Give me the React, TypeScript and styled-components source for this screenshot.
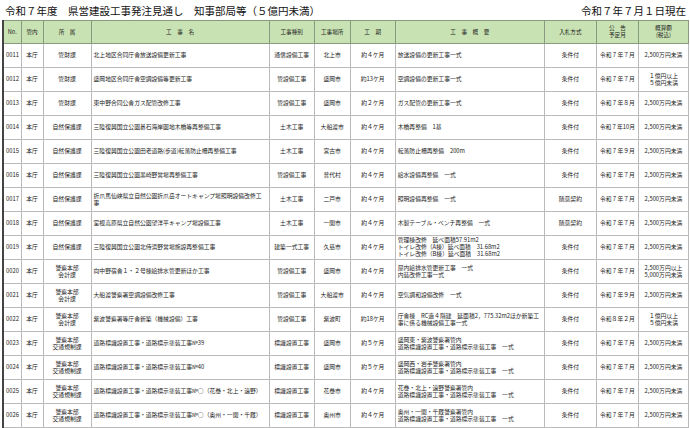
import React from 'react';
import styled, { createGlobalStyle } from 'styled-components';

const Global = createGlobalStyle`
  body { margin: 0; background: #fff; font-family: "Noto Sans CJK JP", "Noto Sans", sans-serif; color: #222; }
`;

const Page = styled.div`
  width: 690px;
  height: 428px;
  overflow: hidden;
`;

const TitleBar = styled.div`
  display: flex;
  justify-content: space-between;
  align-items: center;
  height: 20px;
  padding: 0 4px 0 5px;
  font-size: 10.5px;
  color: #111;
`;

const Table = styled.table`
  margin-left: 2px;
  width: 687px;
  border-collapse: collapse;
  table-layout: fixed;
  border-left: 2px solid #444;
  font-size: 5.8px;
`;

const Th = styled.th`
  background: #c9e2b3;
  border: 1px solid #8a9a80;
  height: 22px;
  font-weight: normal;
  font-size: 5.6px;
  line-height: 1.2;
  text-align: center;
  padding: 0;
`;

const Td = styled.td<{ $align?: string; $nowrap?: boolean }>`
  border: 1px solid #bbb;
  height: 23px;
  padding: 0 2px;
  text-align: ${p => p.$align || 'center'};
  line-height: 1.2;
  vertical-align: middle;
  white-space: ${p => (p.$nowrap ? 'nowrap' : 'pre-line')};
`;

type Row = [string, string, string, string, string, string, string, string, string, string];

const rows: Row[] = [
  ['0011', '管財課', '北上地区合同庁舎放送設備更新工事', '通信設備工事', '北上市', '約４ケ月', '放送設備の更新工事一式', '条件付', '令和７年７月', '2,500万円未満'],
  ['0012', '管財課', '盛岡地区合同庁舎空調設備等更新工事', '管設備工事', '盛岡市', '約13ケ月', '空調設備の更新工事一式', '条件付', '令和７年７月', '１億円以上\n５億円未満'],
  ['0013', '管財課', '東中野合同公舎ガス配管改修工事', '管設備工事', '盛岡市', '約２ケ月', 'ガス配管の更新工事一式', '条件付', '令和７年８月', '2,500万円未満'],
  ['0014', '自然保護課', '三陸復興国立公園碁石海岸園地木橋等再整備工事', '土木工事', '大船渡市', '約４ケ月', '木橋再整備　1基', '条件付', '令和７年10月', '2,500万円未満'],
  ['0015', '自然保護課', '三陸復興国立公園田老道路(歩道)転落防止柵再整備工事', '土木工事', '宮古市', '約４ケ月', '転落防止柵再整備　200m', '条件付', '令和７年９月', '2,500万円未満'],
  ['0016', '自然保護課', '三陸復興国立公園黒崎野営場再整備工事', '管設備工事', '普代村', '約４ケ月', '給水設備再整備　一式', '条件付', '令和７年７月', '2,500万円未満'],
  ['0017', '自然保護課', '折爪馬仙峡県立自然公園折爪岳オートキャンプ場照明設備改修工事', '土木工事', '二戸市', '約４ケ月', '照明設備再整備　一式', '随意契約', '令和７年７月', '2,500万円未満'],
  ['0018', '自然保護課', '室根高原県立自然公園望洋平キャンプ場設備工事', '土木工事', '一関市', '約４ケ月', '木製テーブル・ベンチ再整備　一式', '随意契約', '令和７年７月', '2,500万円未満'],
  ['0019', '自然保護課', '三陸復興国立公園北侍浜野営場施設再整備工事', '建築一式工事', '久慈市', '約４ケ月', '管理棟改修　延べ面積57.91m2\nトイレ改修（A棟）延べ面積　31.68m2\nトイレ改修（B棟）延べ面積　31.68m2', '条件付', '令和７年７月', '2,500万円未満'],
  ['0020', '警察本部\n会計課', '向中野宿舎１・２号棟給排水管更新ほか工事', '管設備工事', '盛岡市', '約４ケ月', '屋内給排水管更新工事　一式\n内装改修工事一式', '条件付', '令和７年７月', '2,500万円以上\n5,000万円未満'],
  ['0021', '警察本部\n会計課', '大船渡警察署空調設備改修工事', '管設備工事', '大船渡市', '約４ケ月', '空気調和設備改修　一式', '条件付', '令和７年９月', '2,500万円未満'],
  ['0022', '警察本部\n会計課', '紫波警察署等庁舎新築（機械設備）工事', '管設備工事', '紫波町', '約18ケ月', '庁舎棟　RC造４階建　延面積2，775.32m2ほか新築工事に係る機械設備工事一式', '条件付', '令和８年２月', '１億円以上\n５億円未満'],
  ['0023', '警察本部\n交通規制課', '道路標識設置工事・道路標示塗装工事№39', '標識設置工事', '盛岡市', '約５ケ月', '盛岡東・紫波警察署管内\n道路標識設置工事・道路標示塗装工事　一式', '条件付', '令和７年７月', '2,500万円未満'],
  ['0024', '警察本部\n交通規制課', '道路標識設置工事・道路標示塗装工事№40', '標識設置工事', '盛岡市', '約５ケ月', '盛岡西・岩手警察署管内\n道路標識設置工事・道路標示塗装工事　一式', '条件付', '令和７年７月', '2,500万円未満'],
  ['0025', '警察本部\n交通規制課', '道路標識設置工事・道路標示塗装工事№○（花巻・北上・遠野）', '標識設置工事', '花巻市', '約４ケ月', '花巻・北上・遠野警察署管内\n道路標識設置工事・道路標示塗装工事　一式', '条件付', '令和７年７月', '2,500万円未満'],
  ['0026', '警察本部\n交通規制課', '道路標識設置工事・道路標示塗装工事№○（奥州・一関・千厩）', '標識設置工事', '奥州市', '約４ケ月', '奥州・一関・千厩警察署管内\n道路標識設置工事・道路標示塗装工事　一式', '条件付', '令和７年７月', '2,500万円未満'],
];

const widths = [18, 22, 48, 178, 45, 36, 45, 149, 52, 42, 50];

export default function App() {
  return (
    <Page>
      <Global />
      <TitleBar>
        <span>令和７年度　県営建設工事発注見通し　知事部局等（５億円未満）</span>
        <span>令和７年７月１日現在</span>
      </TitleBar>
      <Table>
        <colgroup>
          {widths.map((w, i) => <col key={i} style={{ width: w }} />)}
        </colgroup>
        <thead>
          <tr>
            <Th>No.</Th>
            <Th>管内</Th>
            <Th>所　属</Th>
            <Th>工　事　名</Th>
            <Th>工事種別</Th>
            <Th>工事場所</Th>
            <Th>工　期</Th>
            <Th>工　事　概　要</Th>
            <Th>入札方式</Th>
            <Th>公　告<br />予定月</Th>
            <Th>概算額<br />(税込)</Th>
          </tr>
        </thead>
        <tbody>
          {rows.map(r => (
            <tr key={r[0]}>
              <Td $align="left">{r[0]}</Td>
              <Td>本庁</Td>
              <Td>{r[1]}</Td>
              <Td $align="left">{r[2]}</Td>
              <Td>{r[3]}</Td>
              <Td $nowrap>{r[4]}</Td>
              <Td>{r[5]}</Td>
              <Td $align="left">{r[6]}</Td>
              <Td>{r[7]}</Td>
              <Td $nowrap>{r[8]}</Td>
              <Td>{r[9]}</Td>
            </tr>
          ))}
        </tbody>
      </Table>
    </Page>
  );
}
